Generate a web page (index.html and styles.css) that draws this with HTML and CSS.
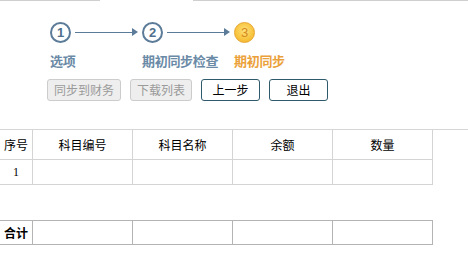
FILE: index.html
```html
<!DOCTYPE html>
<html>
<head>
<meta charset="utf-8">
<link rel="stylesheet" href="styles.css">
</head>
<body>
<div class="topbar"><span class="seg seg-a"></span><span class="seg-gap"></span><span class="seg seg-b"></span></div>
<div class="steps">
  <div class="circle done">1</div>
  <div class="arrow"><span class="line"></span><span class="head"></span></div>
  <div class="circle done">2</div>
  <div class="arrow"><span class="line"></span><span class="head"></span></div>
  <div class="circle current">3</div>
  <div class="label done-label">选项</div>
  <div class="label done-label l2">期初同步检查</div>
  <div class="label current-label l3">期初同步</div>
</div>
<div class="buttons">
  <button class="btn disabled w1">同步到财务</button>
  <button class="btn disabled w2">下载列表</button>
  <button class="btn active w3">上一步</button>
  <button class="btn active w3">退出</button>
</div>
<div class="divider"></div>
<table class="grid main">
  <colgroup><col class="c1"><col class="c2"><col class="c2"><col class="c2"><col class="c2"></colgroup>
  <tr class="head-row"><td>序号</td><td>科目编号</td><td>科目名称</td><td>余额</td><td>数量</td></tr>
  <tr class="data-row"><td class="num">1</td><td></td><td></td><td></td><td></td></tr>
</table>
<table class="grid total">
  <colgroup><col class="c1"><col class="c2"><col class="c2"><col class="c2"><col class="c2"></colgroup>
  <tr class="total-row"><td class="bold">合计</td><td></td><td></td><td></td><td></td></tr>
</table>
</body>
</html>
```
FILE: styles.css
```css
html, body { margin: 0; padding: 0; background: #fff; }
body { font-family: "Noto Sans CJK SC", "Liberation Sans", sans-serif; font-size: 12px; color: #000; width: 468px; height: 261px; overflow: hidden; }
.topbar { display: flex; height: 1px; }
.seg { height: 1px; background: #cfcfcf; }
.seg-a { width: 100px; }
.seg-gap { width: 93px; }
.seg-b { flex: 1; }
.steps { display: grid; grid-template-columns: 20px 72px 20px 72px 20px; grid-template-rows: 20px 13px; row-gap: 12px; margin: 21px 0 0 50px; width: 204px; }
.circle { box-sizing: border-box; width: 21px; height: 21px; border-radius: 50%; display: flex; align-items: center; justify-content: center; font-family: "Liberation Sans", sans-serif; font-size: 13px; font-weight: bold; line-height: 1; }
.circle.done { border: 2px solid #5b7b98; background: #fff; color: #4f6f8c; }
.circle.current { border: 1px solid #e6a42c; background: radial-gradient(circle at 50% 40%, #fde07a 0%, #f8c43e 60%, #eeaa2a 100%); color: #d68a1e; font-weight: normal; }
.arrow { display: flex; align-items: center; padding: 0 4px 0 5px; }
.line { flex: 1; height: 1px; background: #5b7b98; }
.head { width: 0; height: 0; border-top: 4px solid transparent; border-bottom: 4px solid transparent; border-left: 6px solid #5b7b98; }
.label { grid-row: 2; white-space: nowrap; font-size: 13px; font-weight: bold; line-height: 13px; letter-spacing: -0.3px; }
.label.l2 { grid-column: 3; }
.label.l3 { grid-column: 5; }
.done-label { color: #6a8aa6; }
.current-label { color: #eba13a; }
.buttons { display: flex; gap: 9px; margin: 12px 0 0 47px; height: 22px; }
.btn { box-sizing: border-box; height: 22px; padding: 0; font-family: "Noto Sans CJK SC", sans-serif; font-size: 12px; line-height: 20px; border-radius: 3px; }
.btn.disabled { background: #eeeeee; border: 1px solid #cccccc; color: #9a9a9a; }
.btn.active { background: #fff; border: 1px solid #2f5a6c; color: #000; }
.w1 { width: 74px; }
.w2 { width: 62px; }
.w3 { width: 59px; }
.divider { height: 1px; background: #d6d6d6; margin-top: 28px; }
.grid { border-collapse: separate; border-spacing: 0; table-layout: fixed; width: 433px; }
.c1 { width: 33px; }
.c2 { width: 100px; }
.grid td { box-sizing: border-box; padding: 0; text-align: center; border-right: 1px solid #d4d4d4; border-bottom: 1px solid #d4d4d4; }
.head-row td { height: 30px; }
.data-row td { height: 25px; }
.num { font-family: "Liberation Serif", serif; font-size: 12px; }
.total { margin-top: 35px; border-top: 1px solid #b4b4b4; }
.total td { border-color: #b4b4b4; height: 24px; }
.bold { font-weight: bold; font-size: 12px; }
```
